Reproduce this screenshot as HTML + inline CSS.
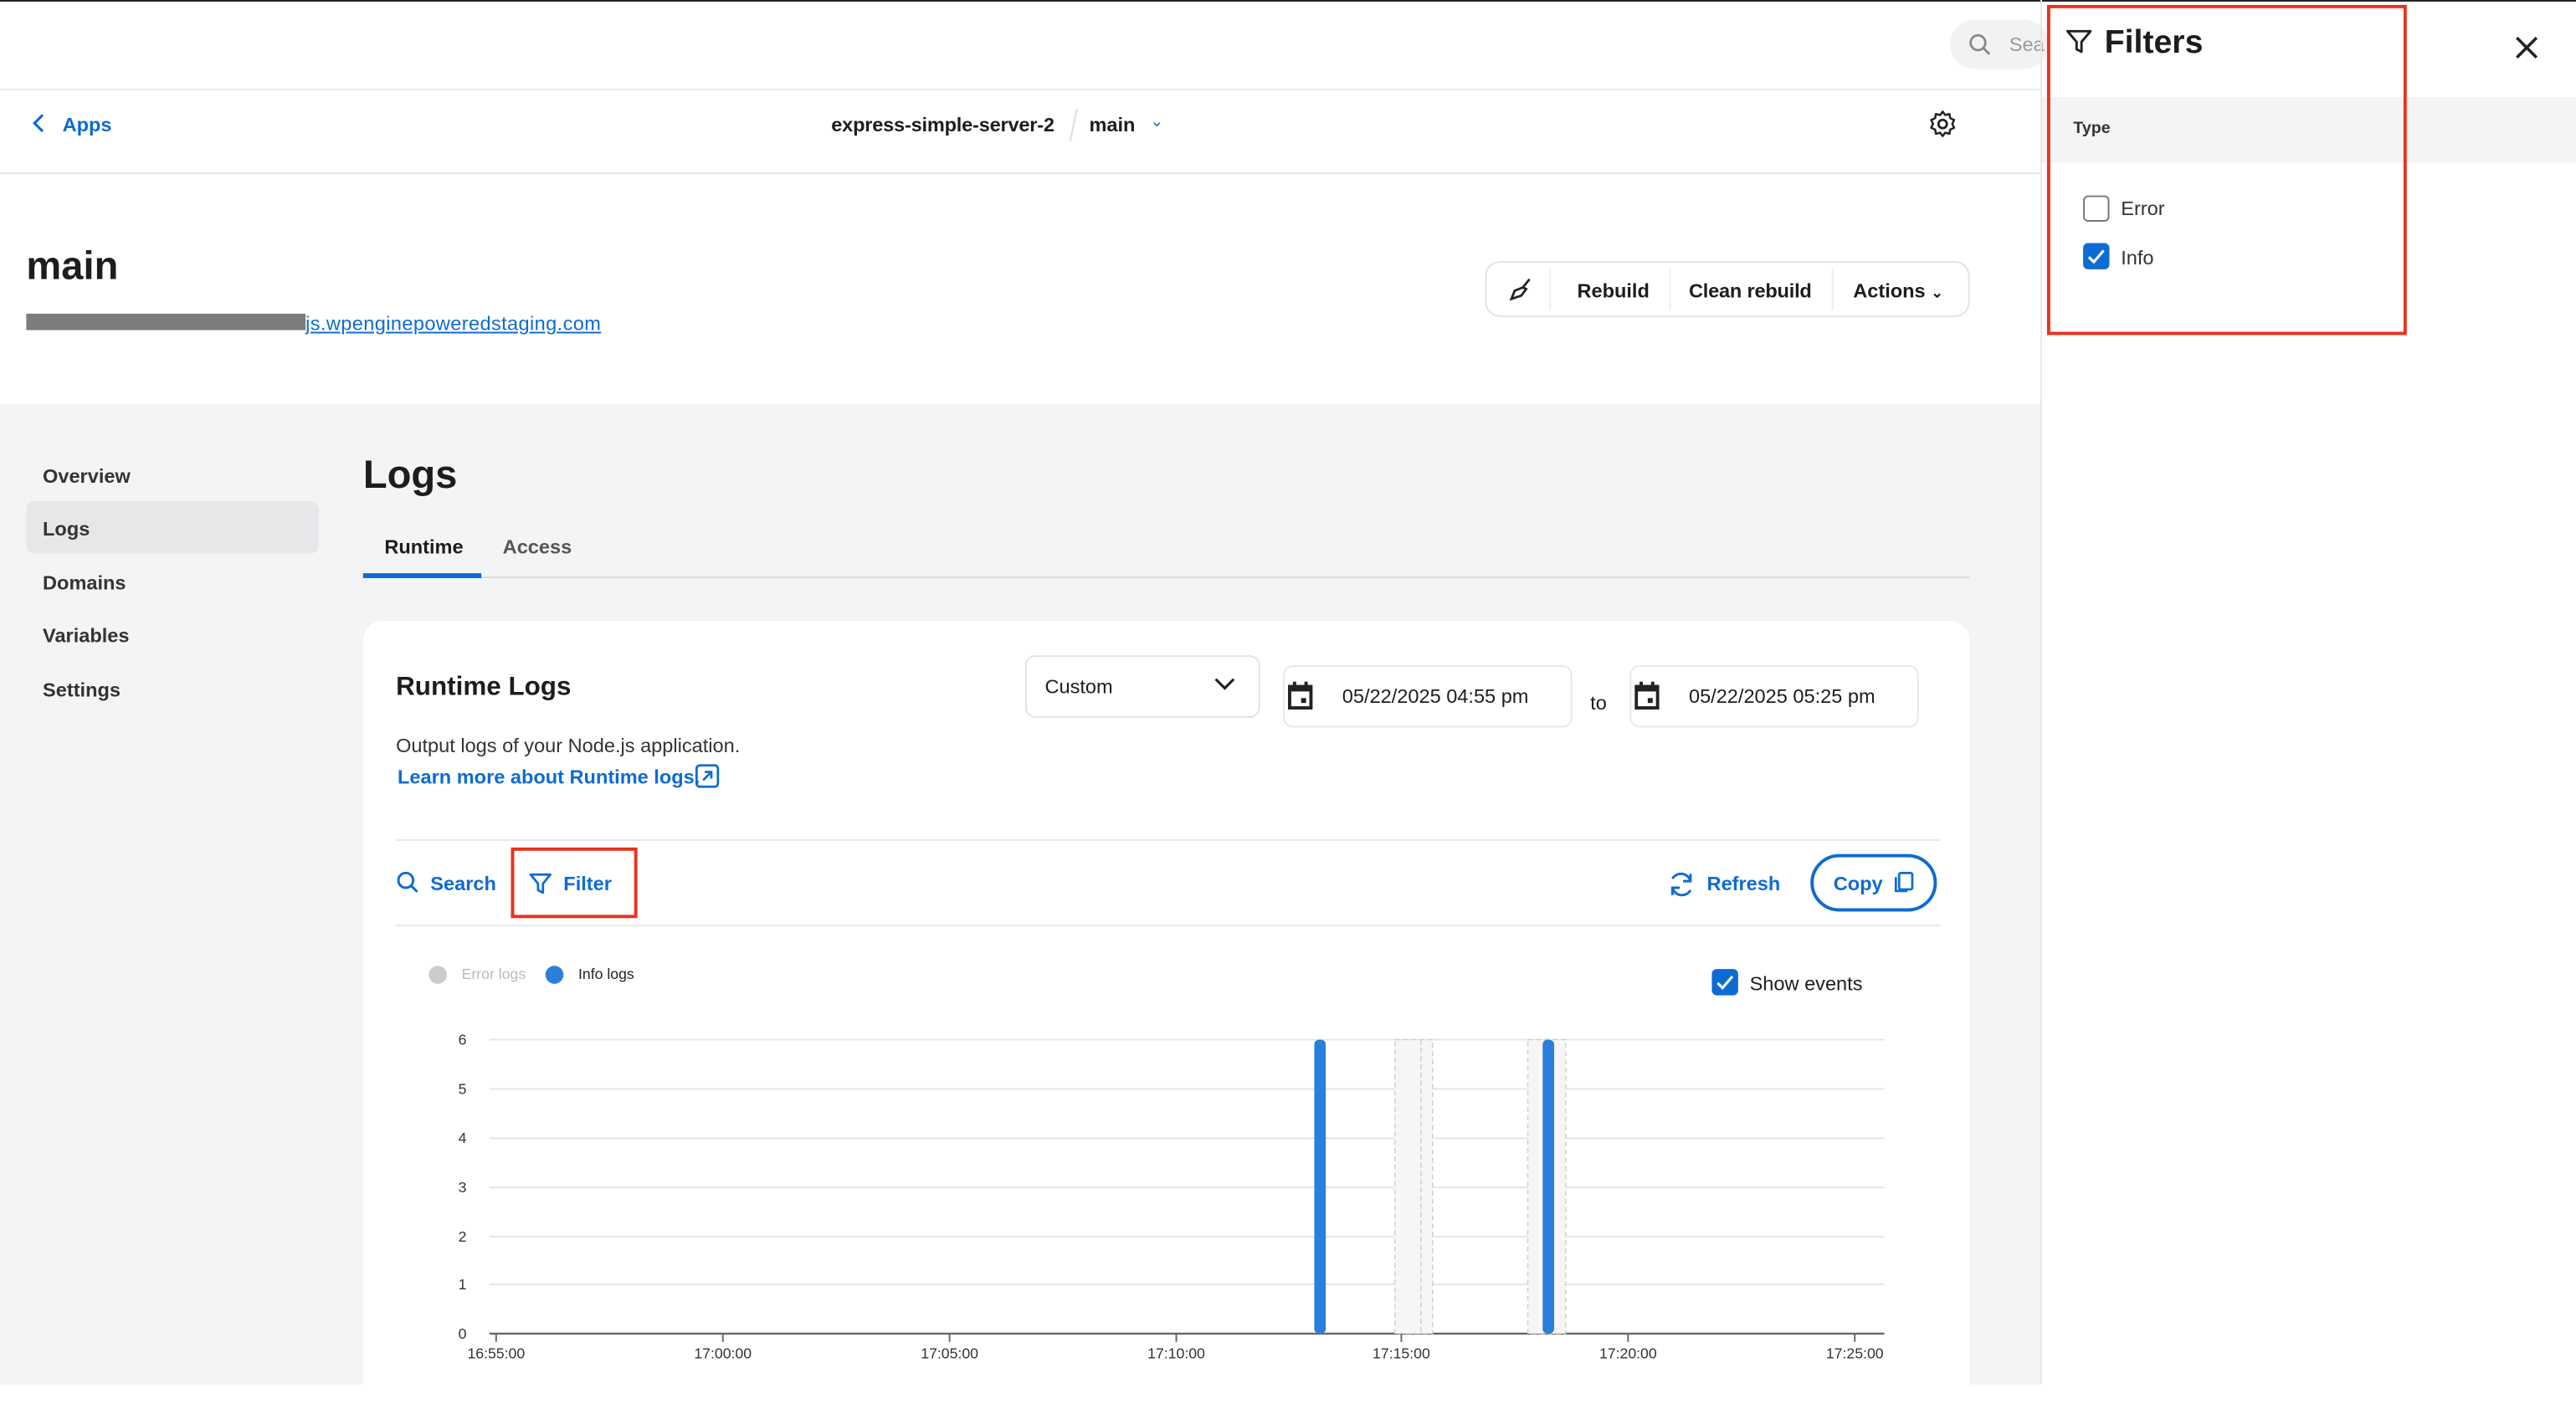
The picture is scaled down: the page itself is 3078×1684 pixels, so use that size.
<!DOCTYPE html>
<html><head><meta charset="utf-8"><style>
*{box-sizing:border-box;margin:0;padding:0}
html,body{width:3078px;height:1654px;overflow:hidden;background:#fff}
#w{position:absolute;left:0;top:0;width:1568px;height:843px;transform:scale(1.963);transform-origin:0 0;font-family:"Liberation Sans",sans-serif;color:#1d1d1f;font-size:12px}
.a{position:absolute}
.b{font-weight:bold}
.blue{color:#0e6bd3}
</style></head><body><div id="w">
<div class="a" style="left:0;top:0;width:1568px;height:1px;background:#222"></div>
<div class="a" style="left:1187px;top:12px;width:60px;height:30px;background:#f1f2f3;border-radius:15px"></div>
<svg class="a" style="left:1198px;top:20px" width="14" height="14" viewBox="0 0 14 14"><circle cx="6" cy="6" r="4.5" fill="none" stroke="#888" stroke-width="1.4"/><path d="M9.5 9.5L13 13" stroke="#888" stroke-width="1.4"/></svg>
<div class="a" style="left:1223px;top:20px;color:#999;font-size:12px">Sea</div>
<div class="a" style="left:0;top:54px;width:1242px;height:1px;background:#ececec"></div>
<div class="a" style="left:0;top:105px;width:1242px;height:1px;background:#e3e3e3"></div>
<svg class="a" style="left:19px;top:69px" width="10" height="12" viewBox="0 0 10 12"><path d="M7 1L2 6l5 5" fill="none" stroke="#0e6bd3" stroke-width="1.6"/></svg>
<div class="a b blue" style="left:38px;top:69px;font-size:12px">Apps</div>
<div class="a b" style="left:506px;top:69px;font-size:12px;letter-spacing:-0.1px">express-simple-server-2</div>
<div class="a" style="left:653px;top:66px;width:1px;height:20px;background:#ddd;transform:rotate(12deg)"></div>
<div class="a b" style="left:663px;top:69px;font-size:12px">main</div>
<div class="a blue" style="left:700px;top:69px;font-size:10px">&#8964;</div>
<svg class="a" style="left:1173px;top:66px" width="19" height="19" viewBox="0 0 24 24"><circle cx="12" cy="12" r="3.2" fill="none" stroke="#222" stroke-width="1.8"/><path d="M12 2.5l2 2.6 3.2-.8.6 3.2 3 1.4-1.4 3 1.4 3-3 1.4-.6 3.2-3.2-.8-2 2.6-2-2.6-3.2.8-.6-3.2-3-1.4 1.4-3-1.4-3 3-1.4.6-3.2 3.2.8z" fill="none" stroke="#222" stroke-width="1.6" stroke-linejoin="round"/></svg>
<div class="a b" style="left:16px;top:149px;font-size:24px">main</div>
<div class="a" style="left:16px;top:191px;width:170px;height:10px;background:#7c7c7c"></div>
<div class="a blue" style="left:16px;top:190px;width:370px;font-size:12px;text-decoration:underline;letter-spacing:0.2px"><span style="display:inline-block;width:170px"></span>js.wpenginepoweredstaging.com</div>
<div class="a" style="left:904px;top:159px;width:295px;height:34px;border:1px solid #e3e3e3;border-radius:9px;background:#fff"></div>
<svg class="a" style="left:918px;top:168px" width="16" height="16" viewBox="0 0 16 16"><path d="M13 2L9 7M9 7l-5 2-2 5 6-2 3-4z" fill="none" stroke="#222" stroke-width="1.4"/></svg>
<div class="a" style="left:943px;top:163px;width:1px;height:26px;background:#eee"></div>
<div class="a b" style="left:960px;top:170px">Rebuild</div>
<div class="a" style="left:1016px;top:163px;width:1px;height:26px;background:#eee"></div>
<div class="a b" style="left:1028px;top:170px;letter-spacing:-0.1px">Clean rebuild</div>
<div class="a" style="left:1115px;top:163px;width:1px;height:26px;background:#eee"></div>
<div class="a b" style="left:1128px;top:170px">Actions <span style="font-size:9px">&#8964;</span></div>
<div class="a" style="left:0;top:246px;width:1242px;height:597px;background:#f3f4f5"></div>
<div class="a" style="left:16px;top:305px;width:178px;height:32px;background:#e5e7e9;border-radius:5px"></div>
<div class="a b" style="left:26px;top:283px;color:#333">Overview</div>
<div class="a b" style="left:26px;top:315px;color:#333">Logs</div>
<div class="a b" style="left:26px;top:348px;color:#333">Domains</div>
<div class="a b" style="left:26px;top:380px;color:#333">Variables</div>
<div class="a b" style="left:26px;top:413px;color:#333">Settings</div>
<div class="a b" style="left:221px;top:276px;font-size:24px">Logs</div>
<div class="a b" style="left:234px;top:326px">Runtime</div>
<div class="a b" style="left:306px;top:326px;color:#555">Access</div>
<div class="a" style="left:221px;top:351px;width:978px;height:1px;background:#dcdcdc"></div>
<div class="a" style="left:221px;top:349px;width:72px;height:3px;background:#0e6bd3"></div>
<div class="a" style="left:221px;top:378px;width:978px;height:480px;background:#fff;border-radius:12px"></div>
<div class="a b" style="left:241px;top:410px;font-size:16px">Runtime Logs</div>
<div class="a" style="left:241px;top:447px;color:#333">Output logs of your Node.js application.</div>
<div class="a b blue" style="left:242px;top:466px">Learn more about Runtime logs.</div>
<svg class="a" style="left:423px;top:465px" width="15" height="15" viewBox="0 0 15 15"><rect x="1" y="1" width="13" height="13" rx="2" fill="none" stroke="#0e6bd3" stroke-width="1.4"/><path d="M5 10l5-5M6 5h4v4" fill="none" stroke="#0e6bd3" stroke-width="1.4"/></svg>
<div class="a" style="left:624px;top:399px;width:143px;height:38px;border:1px solid #e3e3e3;border-radius:6px"></div>
<div class="a" style="left:636px;top:411px">Custom</div>
<svg class="a" style="left:739px;top:412px" width="13" height="9" viewBox="0 0 13 9"><path d="M1 1.5l5.5 5.5 5.5-5.5" fill="none" stroke="#222" stroke-width="1.6"/></svg>
<div class="a" style="left:781px;top:405px;width:176px;height:38px;border:1px solid #e8e8e8;border-radius:6px"></div>
<div class="a" style="left:992px;top:405px;width:176px;height:38px;border:1px solid #e8e8e8;border-radius:6px"></div>
<svg class="a" style="left:784px;top:415px" width="15" height="17" viewBox="0 0 15 17"><rect x="1" y="3" width="13" height="13" fill="none" stroke="#222" stroke-width="2"/><rect x="1" y="3" width="13" height="3" fill="#222"/><rect x="3" y="0" width="2" height="4" fill="#222"/><rect x="10" y="0" width="2" height="4" fill="#222"/><rect x="8" y="10" width="3" height="3" fill="#222"/></svg>
<svg class="a" style="left:995px;top:415px" width="15" height="17" viewBox="0 0 15 17"><rect x="1" y="3" width="13" height="13" fill="none" stroke="#222" stroke-width="2"/><rect x="1" y="3" width="13" height="3" fill="#222"/><rect x="3" y="0" width="2" height="4" fill="#222"/><rect x="10" y="0" width="2" height="4" fill="#222"/><rect x="8" y="10" width="3" height="3" fill="#222"/></svg>
<div class="a" style="left:817px;top:417px">05/22/2025 04:55 pm</div>
<div class="a" style="left:968px;top:421px">to</div>
<div class="a" style="left:1028px;top:417px">05/22/2025 05:25 pm</div>
<div class="a" style="left:241px;top:511px;width:940px;height:1px;background:#e8e8e8"></div>
<div class="a" style="left:241px;top:563px;width:940px;height:1px;background:#e8e8e8"></div>
<svg class="a" style="left:241px;top:530px" width="14" height="14" viewBox="0 0 14 14"><circle cx="6" cy="6" r="4.5" fill="none" stroke="#0e6bd3" stroke-width="1.5"/><path d="M9.5 9.5L13 13" stroke="#0e6bd3" stroke-width="1.5"/></svg>
<div class="a b blue" style="left:262px;top:531px">Search</div>
<div class="a" style="left:311px;top:516px;width:77px;height:43px;border:2px solid #e8321e"></div>
<svg class="a" style="left:322px;top:531px" width="14" height="14" viewBox="0 0 14 14"><path d="M1 1.5h12L8.5 7v5.5L5.5 11V7z" fill="none" stroke="#0e6bd3" stroke-width="1.4" stroke-linejoin="round"/></svg>
<div class="a b blue" style="left:343px;top:531px">Filter</div>
<svg class="a" style="left:1015px;top:530px" width="17" height="17" viewBox="0 0 17 17"><path d="M14 6.5A6 6 0 0 0 3 5M3 10.5A6 6 0 0 0 14 12" fill="none" stroke="#0e6bd3" stroke-width="1.5"/><path d="M14 2v4.5H9.5M3 15v-4.5h4.5" fill="none" stroke="#0e6bd3" stroke-width="1.5"/></svg>
<div class="a b blue" style="left:1039px;top:531px">Refresh</div>
<div class="a" style="left:1102px;top:520px;width:77px;height:35px;border:2px solid #0e6bd3;border-radius:18px"></div>
<div class="a b blue" style="left:1116px;top:531px">Copy</div>
<svg class="a" style="left:1152px;top:530px" width="14" height="14" viewBox="0 0 14 14"><rect x="4" y="1.5" width="8" height="10" rx="1" fill="none" stroke="#0e6bd3" stroke-width="1.4"/><path d="M2 4v8.5h7" fill="none" stroke="#0e6bd3" stroke-width="1.4"/></svg>
<div class="a" style="left:261px;top:588px;width:11px;height:11px;border-radius:50%;background:#ccc"></div>
<div class="a" style="left:281px;top:588px;font-size:9px;color:#bbb">Error logs</div>
<div class="a" style="left:332px;top:588px;width:11px;height:11px;border-radius:50%;background:#2a7fdc"></div>
<div class="a" style="left:352px;top:588px;font-size:9px;color:#222">Info logs</div>
<div class="a" style="left:1042px;top:590px;width:16px;height:16px;border-radius:3px;background:#0e6bd3"></div>
<svg class="a" style="left:1042px;top:590px" width="16" height="16" viewBox="0 0 16 16"><path d="M3.5 8.5l3 3 6-7" fill="none" stroke="#fff" stroke-width="1.6"/></svg>
<div class="a" style="left:1065px;top:592px">Show events</div>
<svg class="a" style="left:270px;top:620px" width="890" height="223" viewBox="0 0 890 223" font-family="Liberation Sans,sans-serif" font-size="9" fill="#333">
<g stroke="#e5e5e5" stroke-width="1">
<line x1="28" y1="13" x2="877" y2="13"/><line x1="28" y1="43" x2="877" y2="43"/><line x1="28" y1="73" x2="877" y2="73"/><line x1="28" y1="103" x2="877" y2="103"/><line x1="28" y1="133" x2="877" y2="133"/><line x1="28" y1="162" x2="877" y2="162"/></g>
<line x1="28" y1="192" x2="877" y2="192" stroke="#666" stroke-width="1.2"/>
<g fill="#f6f6f6" stroke="#ccc" stroke-dasharray="3,2" stroke-width="0.7"><rect x="579" y="13" width="23" height="179"/><rect x="660" y="13" width="23" height="179"/></g>
<line x1="595" y1="13" x2="595" y2="192" stroke="#ccc" stroke-dasharray="3,2" stroke-width="0.7"/>
<rect x="530" y="13" width="7" height="179" rx="3" fill="#2a7fdc"/>
<rect x="669" y="13" width="7" height="179" rx="3" fill="#2a7fdc"/>
<g text-anchor="end"><text x="14" y="16">6</text><text x="14" y="46">5</text><text x="14" y="76">4</text><text x="14" y="106">3</text><text x="14" y="136">2</text><text x="14" y="165">1</text><text x="14" y="195">0</text></g>
<g stroke="#666"><line x1="32" y1="192" x2="32" y2="197"/><line x1="170" y1="192" x2="170" y2="197"/><line x1="308" y1="192" x2="308" y2="197"/><line x1="446" y1="192" x2="446" y2="197"/><line x1="583" y1="192" x2="583" y2="197"/><line x1="721" y1="192" x2="721" y2="197"/><line x1="859" y1="192" x2="859" y2="197"/></g>
<g text-anchor="middle"><text x="32" y="207">16:55:00</text><text x="170" y="207">17:00:00</text><text x="308" y="207">17:05:00</text><text x="446" y="207">17:10:00</text><text x="583" y="207">17:15:00</text><text x="721" y="207">17:20:00</text><text x="859" y="207">17:25:00</text></g>
</svg>
<div class="a" style="left:1242px;top:0;width:1px;height:843px;background:#e8e8e8"></div>
<div class="a" style="left:1243px;top:59px;width:325px;height:40px;background:#f3f4f5"></div>
<div class="a" style="left:1246px;top:3px;width:219px;height:201px;border:2px solid #e8321e"></div>
<svg class="a" style="left:1257px;top:17px" width="17" height="17" viewBox="0 0 17 17"><path d="M1.5 2h14L10 8.5v6l-3-1.5V8.5z" fill="none" stroke="#222" stroke-width="1.5" stroke-linejoin="round"/></svg>
<div class="a b" style="left:1281px;top:15px;font-size:20px">Filters</div>
<svg class="a" style="left:1531px;top:22px" width="14" height="14" viewBox="0 0 14 14"><path d="M1 1l12 12M13 1L1 13" stroke="#222" stroke-width="1.8"/></svg>
<div class="a b" style="left:1262px;top:73px;font-size:10px;color:#333">Type</div>
<div class="a" style="left:1268px;top:119px;width:16px;height:16px;border:1.5px solid #777;border-radius:3px"></div>
<div class="a" style="left:1291px;top:120px;color:#333">Error</div>
<div class="a" style="left:1268px;top:148px;width:16px;height:16px;border-radius:3px;background:#0e6bd3"></div>
<svg class="a" style="left:1268px;top:148px" width="16" height="16" viewBox="0 0 16 16"><path d="M3.5 8.5l3 3 6-7" fill="none" stroke="#fff" stroke-width="1.6"/></svg>
<div class="a" style="left:1291px;top:150px;color:#333">Info</div>
</div></body></html>
